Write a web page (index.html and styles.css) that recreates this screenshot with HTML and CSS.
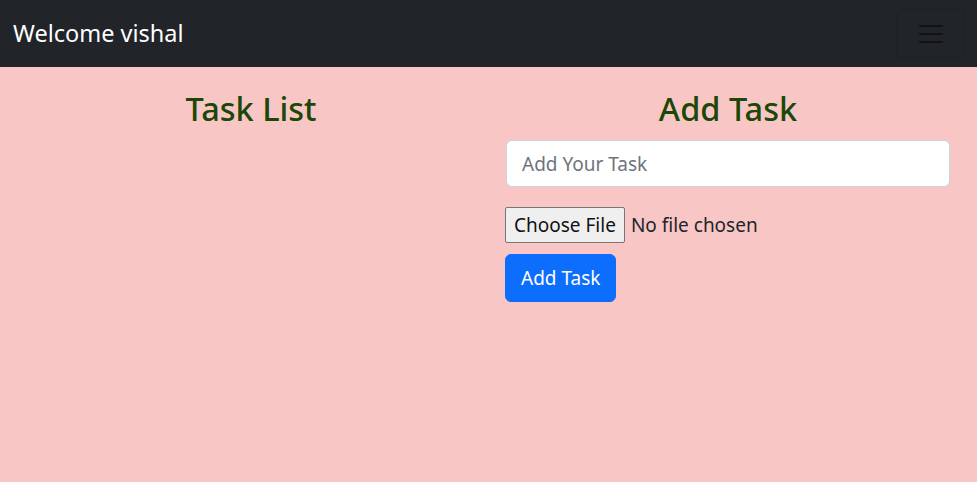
FILE: index.html
```html
<!DOCTYPE html>
<html>
<head>
<meta charset="utf-8">
<link rel="stylesheet" href="styles.css">
</head>
<body>
<nav class="navbar">
  <span class="brand">Welcome vishal</span>
  <button class="toggler" aria-label="menu">
    <svg width="30" height="30" viewBox="0 0 30 30"><path d="M4 7h22M4 15h22M4 23h22" stroke="#111316" stroke-width="2.2" stroke-linecap="round"/></svg>
  </button>
</nav>
<main class="row">
  <section class="col col-left">
    <h2 class="title">Task List</h2>
  </section>
  <section class="col col-right">
    <h2 class="title">Add Task</h2>
    <input class="task-input" type="text" placeholder="Add Your Task">
    <input class="file-input" type="file">
    <button class="add-btn">Add Task</button>
  </section>
</main>
</body>
</html>
```
FILE: styles.css
```css
* { box-sizing: border-box; }
html, body { margin: 0; padding: 0; }
body {
  font-family: "Noto Sans", "Open Sans", sans-serif;
  background: #f9c6c6;
  color: #212529;
  height: 482px;
}
.navbar {
  height: 67px;
  background: #212529;
  display: flex;
  align-items: center;
  justify-content: space-between;
  padding: 0 12px 0 13px;
}
.brand {
  color: #fff;
  font-size: 23.5px;
  line-height: 1;
}
.toggler {
  width: 69px;
  height: 49px;
  background: transparent;
  border: 1px solid rgba(0,0,0,0.12);
  border-radius: 6px;
  display: flex;
  align-items: center;
  justify-content: center;
  padding: 0;
}
.row {
  display: flex;
  gap: 16px;
  padding: 0 27px 0 12px;
}
.col-left { width: 478px; }
.col-right { width: 444px; display: flex; flex-direction: column; align-items: flex-start; }
.title {
  margin: 22px 0 12px;
  width: 100%;
  text-align: center;
  font-size: 32.5px;
  font-weight: 500;
  line-height: 1.2;
  color: #1b4707;
}
.task-input {
  width: 444px;
  height: 47px;
  border: 1px solid #ced4da;
  border-radius: 6px;
  background: #fff;
  font-family: inherit;
  font-size: 19px;
  padding: 0 15px;
  color: #212529;
  margin-bottom: 20px;
}
.task-input::placeholder { color: #6c757d; }
.file-input {
  font-family: inherit;
  font-size: 19px;
  color: #212529;
  margin: 0 0 11px -1px;
}
.file-input::file-selector-button {
  font-family: inherit;
  font-size: 19px;
  height: 36px;
  padding: 0 8px;
  margin-right: 6px;
  background: #efefef;
  border: 1px solid #767676;
  border-radius: 2px;
  color: #111;
}
.add-btn {
  background: #0d6efd;
  color: #fff;
  border: 1px solid #0d6efd;
  border-radius: 6px;
  font-family: inherit;
  font-size: 19px;
  height: 48px;
  padding: 0 15px;
  margin-left: -1px;
}
```
